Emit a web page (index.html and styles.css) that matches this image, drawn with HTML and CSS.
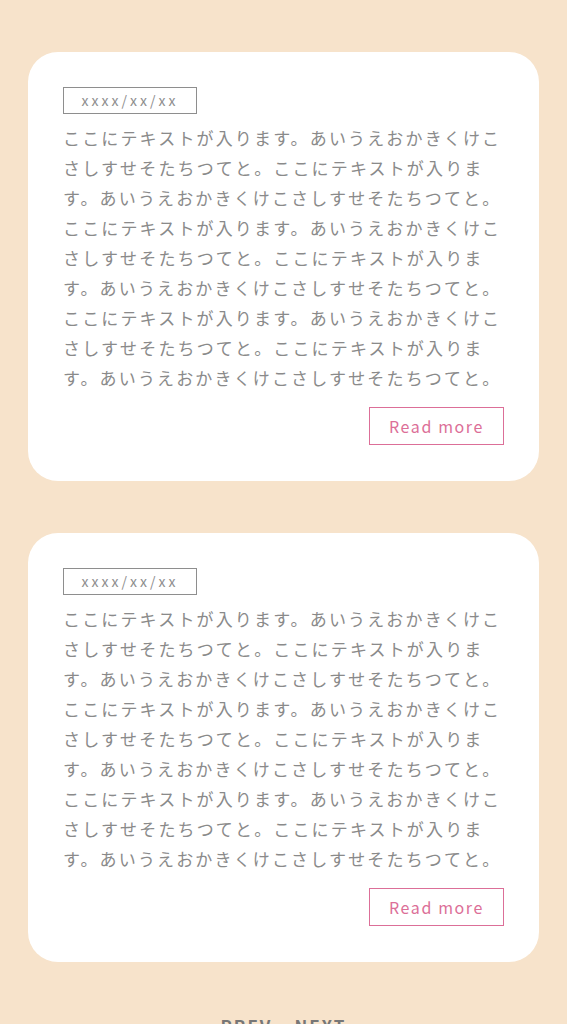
FILE: index.html
```html
<!DOCTYPE html>
<html lang="ja">
<head>
  <meta charset="UTF-8">
  <meta name="viewport" content="width=device-width, initial-scale=1.0">
  <title>News</title>
  <link rel="stylesheet" href="styles.css">
</head>
<body>
  <main class="news-list">
    <article class="news-card">
      <div class="news-date">xxxx/xx/xx</div>
      <p class="news-text">ここにテキストが入ります。あいうえおかきくけこさしすせそたちつてと。ここにテキストが入ります。あいうえおかきくけこさしすせそたちつてと。ここにテキストが入ります。あいうえおかきくけこさしすせそたちつてと。ここにテキストが入ります。あいうえおかきくけこさしすせそたちつてと。ここにテキストが入ります。あいうえおかきくけこさしすせそたちつてと。ここにテキストが入ります。あいうえおかきくけこさしすせそたちつてと。</p>
      <div class="news-more"><a href="#" class="more-button">Read more</a></div>
    </article>

    <article class="news-card">
      <div class="news-date">xxxx/xx/xx</div>
      <p class="news-text">ここにテキストが入ります。あいうえおかきくけこさしすせそたちつてと。ここにテキストが入ります。あいうえおかきくけこさしすせそたちつてと。ここにテキストが入ります。あいうえおかきくけこさしすせそたちつてと。ここにテキストが入ります。あいうえおかきくけこさしすせそたちつてと。ここにテキストが入ります。あいうえおかきくけこさしすせそたちつてと。ここにテキストが入ります。あいうえおかきくけこさしすせそたちつてと。</p>
      <div class="news-more"><a href="#" class="more-button">Read more</a></div>
    </article>

    <nav class="pager">
      <a href="#">PREV</a>
      <a href="#">NEXT</a>
    </nav>
  </main>
</body>
</html>
```

FILE: styles.css
```css
body {
  margin: 0;
  padding: 0;
  background-color: #f7e3cb;
  font-family: "Noto Sans CJK JP", "Noto Sans", sans-serif;
}

.news-list {
  display: flex;
  flex-direction: column;
  gap: 52px;
  padding: 52px 28px 0;
}

.news-card {
  background-color: #fff;
  border-radius: 30px;
  padding: 35px 35px 36px;
  display: flex;
  flex-direction: column;
}

.news-date {
  box-sizing: border-box;
  width: 134px;
  height: 27px;
  border: 1px solid #8e8e8e;
  color: #8e8e8e;
  font-size: 14px;
  line-height: 25px;
  letter-spacing: 3px;
  text-align: center;
}

.news-text {
  margin: 9px 0 0;
  color: #8a8a8a;
  font-size: 17px;
  line-height: 30px;
  letter-spacing: 2.15px;
  line-break: strict;
}

.news-more {
  display: flex;
  justify-content: flex-end;
  margin-top: 14px;
}

.more-button {
  box-sizing: border-box;
  width: 135px;
  height: 38px;
  border: 1px solid #dc6f98;
  color: #dc6f98;
  font-size: 16px;
  line-height: 36px;
  letter-spacing: 1.6px;
  text-align: center;
  text-decoration: none;
}

.pager {
  display: flex;
  justify-content: center;
  gap: 22px;
  padding: 1px 0 40px;
}

.pager a {
  color: #777;
  font-size: 17px;
  font-weight: bold;
  line-height: 22px;
  letter-spacing: 2px;
  text-decoration: none;
}
```
